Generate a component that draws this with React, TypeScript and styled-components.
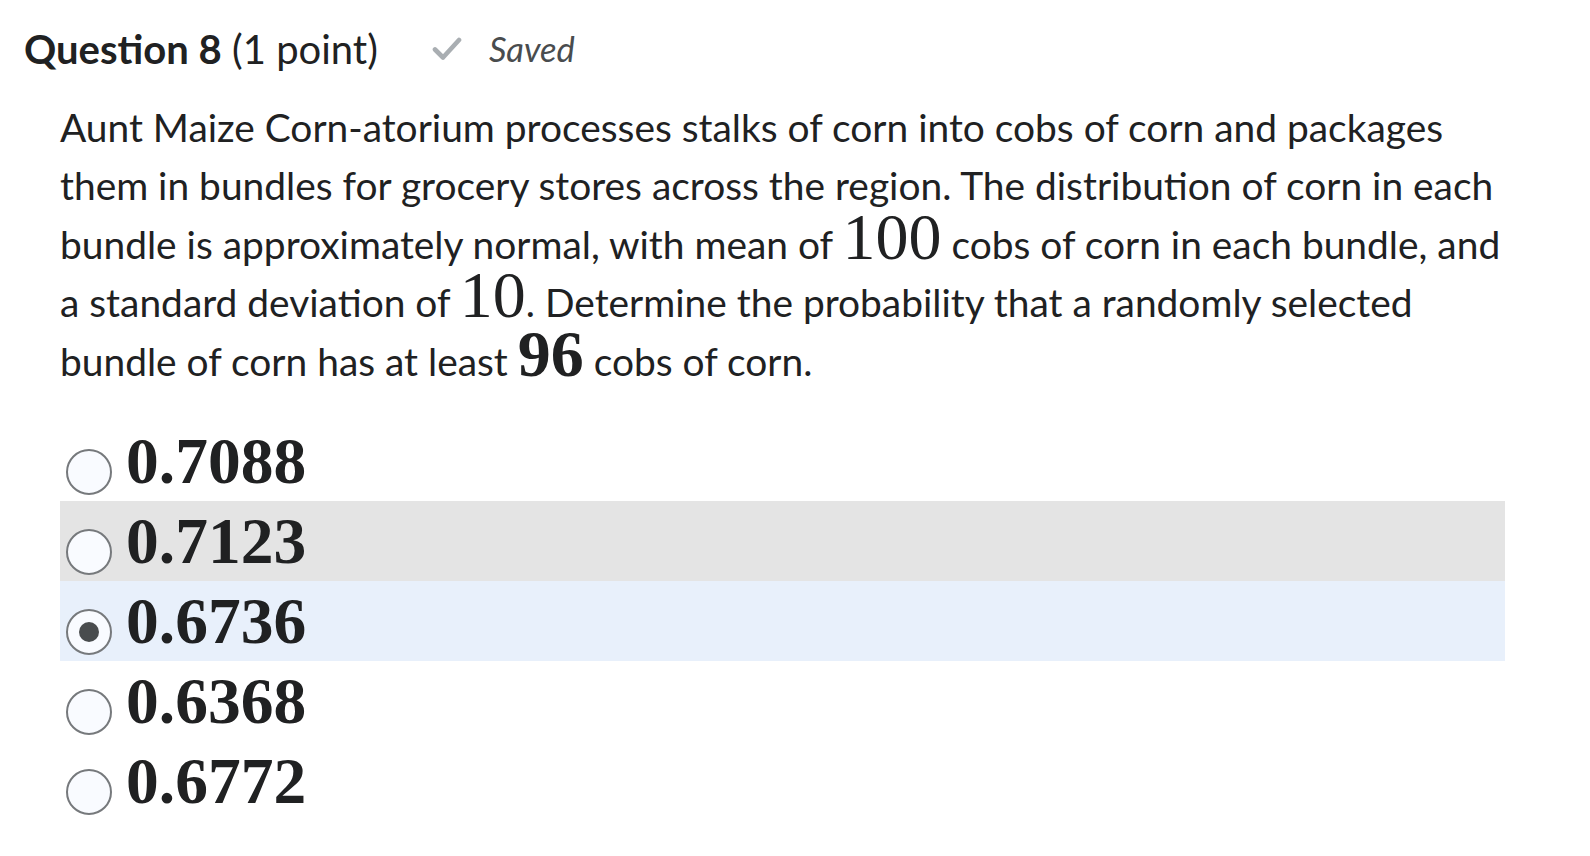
import React from "react";
import styled, { createGlobalStyle } from "styled-components";

const Global = createGlobalStyle`
  html, body { margin: 0; padding: 0; background: #ffffff; }
  body { font-family: Lato, "Noto Sans", sans-serif; color: #202122; }
`;

const Page = styled.div`
  padding: 25px 0 0 24px;
  width: 1481px;
`;

const Header = styled.div`
  display: flex;
  align-items: center;
  line-height: 1.2;
`;

const Title = styled.h2`
  margin: 0;
  font-size: 40px;
  font-weight: 400;
  color: #202122;
  strong { font-weight: 700; }
`;

const SavedBox = styled.div`
  display: flex;
  align-items: center;
  gap: 27px;
  margin-left: 54px;
`;

const SavedText = styled.span`
  font-size: 34.5px;
  font-style: italic;
  color: #494c4e;
`;

const Body = styled.div`
  margin-left: 36px;
  width: 1445px;
`;

const Prompt = styled.p`
  margin: 25px 0 31px;
  font-size: 38.9px;
  line-height: 58.4px;
  white-space: nowrap;
  color: #202122;
`;

const MathNum = styled.span<{ $bold?: boolean }>`
  font-family: "Liberation Serif", "Times New Roman", serif;
  font-size: 66px;
  font-weight: ${(p) => (p.$bold ? 700 : 400)};
  line-height: 0;
`;

const Options = styled.div`
  display: flex;
  flex-direction: column;
`;

const Row = styled.label<{ $state?: "hover" | "selected" }>`
  display: flex;
  align-items: flex-start;
  height: 80px;
  background: ${(p) =>
    p.$state === "hover" ? "#e4e4e4" : p.$state === "selected" ? "#e8f0fb" : "transparent"};
`;

const Radio = styled.span<{ $checked?: boolean }>`
  box-sizing: border-box;
  width: 46px;
  height: 46px;
  margin: 28px 14px 0 6px;
  border-radius: 50%;
  border: 2px solid #76797c;
  background: #f9fbff;
  display: flex;
  align-items: center;
  justify-content: center;
  flex: none;
  &::after {
    content: "";
    display: ${(p) => (p.$checked ? "block" : "none")};
    width: 20px;
    height: 20px;
    border-radius: 50%;
    background: #494c4e;
  }
`;

const OptionText = styled.span`
  font-family: "Liberation Serif", "Times New Roman", serif;
  font-weight: 700;
  font-size: 65.5px;
  line-height: 80px;
  color: #202122;
`;

const CheckIcon = () => (
  <svg width="30" height="26" viewBox="0 0 30 26" aria-hidden>
    <path
      d="M3 13.5 L11 21.5 L27 4"
      fill="none"
      stroke="#a9aeb2"
      strokeWidth="4.6"
      strokeLinecap="round"
      strokeLinejoin="round"
    />
  </svg>
);

const options: { value: string; state?: "hover" | "selected" }[] = [
  { value: "0.7088" },
  { value: "0.7123", state: "hover" },
  { value: "0.6736", state: "selected" },
  { value: "0.6368" },
  { value: "0.6772" },
];

export default function App() {
  return (
    <>
      <Global />
      <Page>
        <Header>
          <Title>
            <strong>Question 8</strong> (1 point)
          </Title>
          <SavedBox>
            <CheckIcon />
            <SavedText>Saved</SavedText>
          </SavedBox>
        </Header>
        <Body>
          <Prompt>
            Aunt Maize Corn-atorium processes stalks of corn into cobs of corn and packages
            <br />
            them in bundles for grocery stores across the region. The distribution of corn in each
            <br />
            bundle is approximately normal, with mean of <MathNum>100</MathNum> cobs of corn in each
            bundle, and
            <br />a standard deviation of <MathNum>10</MathNum>. Determine the probability that a
            randomly selected
            <br />
            bundle of corn has at least <MathNum $bold>96</MathNum> cobs of corn.
          </Prompt>
          <Options>
            {options.map((o) => (
              <Row key={o.value} $state={o.state}>
                <Radio $checked={o.state === "selected"} />
                <OptionText>{o.value}</OptionText>
              </Row>
            ))}
          </Options>
        </Body>
      </Page>
    </>
  );
}
